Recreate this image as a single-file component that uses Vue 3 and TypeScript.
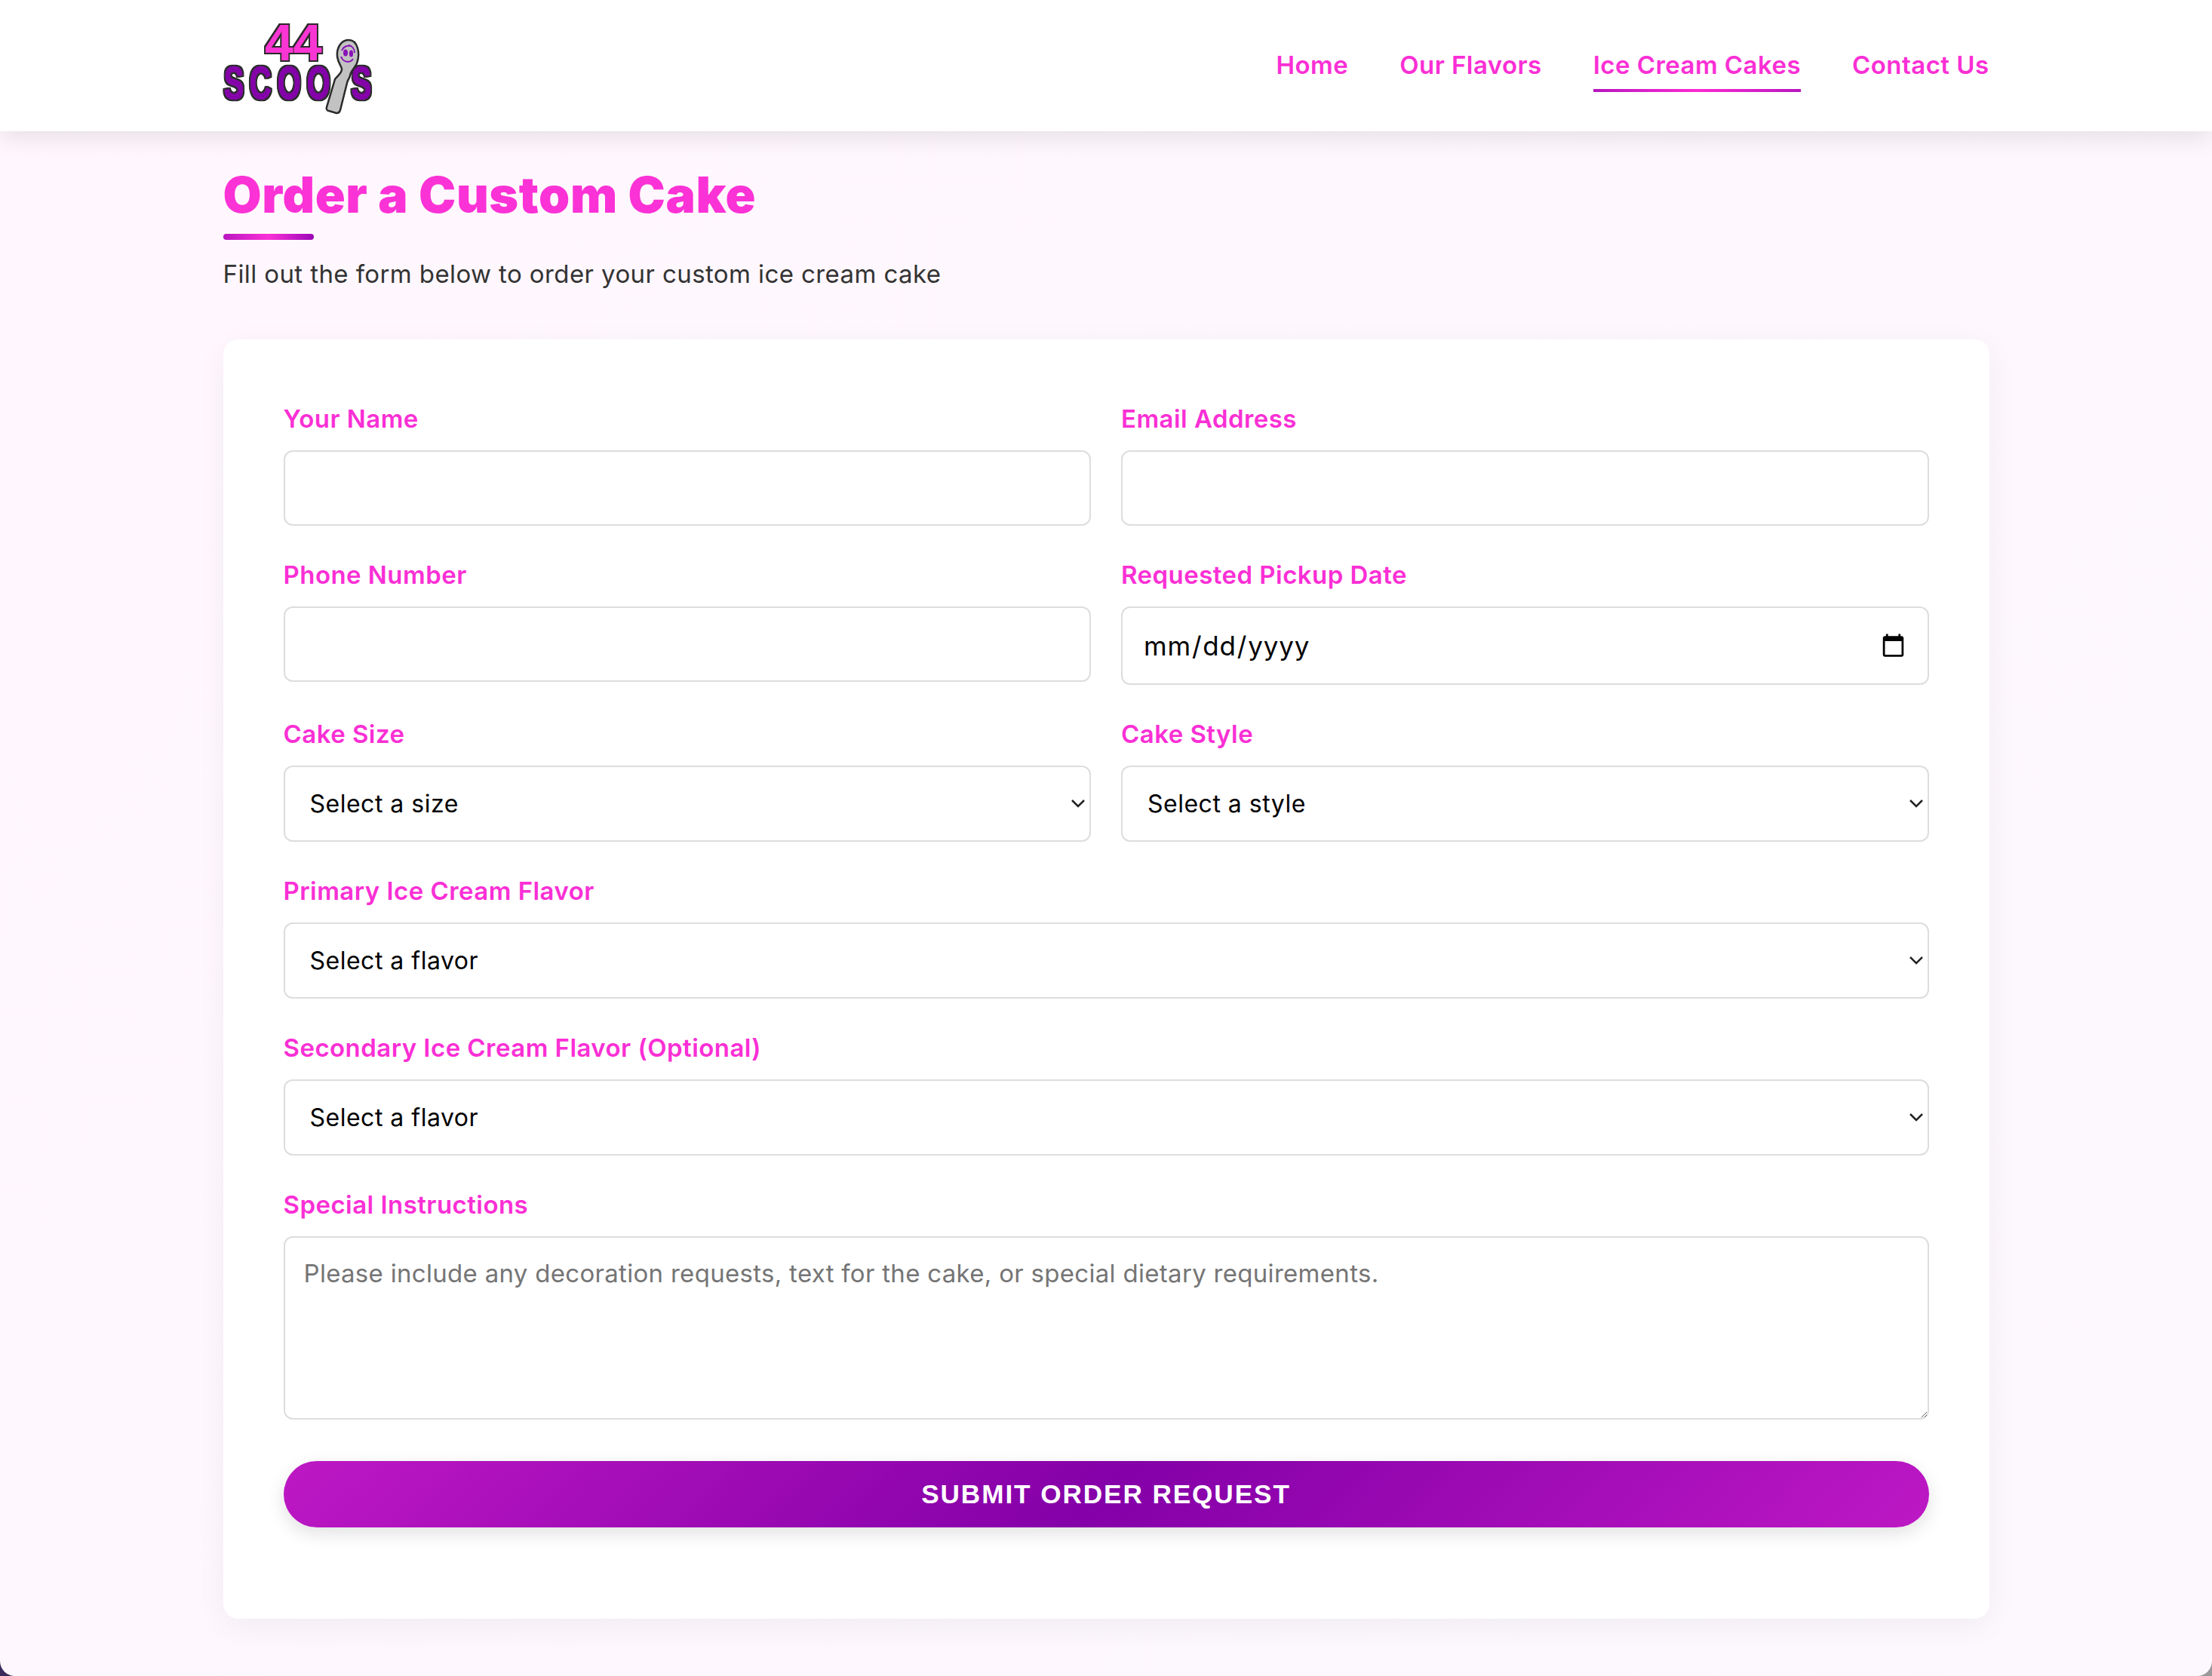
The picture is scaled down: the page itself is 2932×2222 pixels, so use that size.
<script setup lang="ts">
const navLinks = [
  { label: 'Home', active: false },
  { label: 'Our Flavors', active: false },
  { label: 'Ice Cream Cakes', active: true },
  { label: 'Contact Us', active: false },
]
</script>

<template>
  <div class="page">
    <header class="site-header">
      <div class="container header-row">
        <svg class="logo" width="210" height="142" viewBox="0 -4 210 142">
          <defs>
            <filter id="outline" x="-5%" y="-5%" width="110%" height="110%">
              <feMorphology in="SourceAlpha" operator="dilate" radius="1.5" result="fat" />
              <feFlood flood-color="#2b2b2b" />
              <feComposite in2="fat" operator="in" />
              <feMerge>
                <feMergeNode />
                <feMergeNode in="SourceGraphic" />
              </feMerge>
            </filter>
          </defs>
          <g filter="url(#outline)">
            <text class="logo-44" x="60" y="60">44</text>
            <g transform="scale(.64 1)">
              <text class="logo-word" x="9 62 120 181 273" y="111">SCOOS</text>
            </g>
          </g>
          <path class="spoon" d="M171 33C160 33 155 45 156 55C157 63 161 67 162 71C163 76 157 80 153 85L142 122C141 125 143 127 145 127L155 130C158 130 159 129 160 126L169 90C170 85 172 85 173 80C174 74 178 72 182 64C187 50 183 33 171 33Z" />
          <ellipse class="face" cx="167" cy="50" rx="3" ry="4.5" />
          <ellipse class="face" cx="174.5" cy="51" rx="2.6" ry="4.5" />
          <path class="smile" d="M161 55C164 63 173 64 177 58M162 47C164 42 169 40 173 41M171 40C176 41 179 45 179 50" />
        </svg>
        <nav class="nav">
          <a v-for="link in navLinks" :key="link.label" class="nav-link" :class="{ active: link.active }">{{ link.label }}</a>
        </nav>
      </div>
    </header>

    <main class="container main">
      <h1 class="title">Order a Custom Cake</h1>
      <div class="title-bar"></div>
      <p class="intro">Fill out the form below to order your custom ice cream cake</p>

      <form class="card" @submit.prevent>
        <div class="row">
          <div class="field">
            <label>Your Name</label>
            <input type="text" />
          </div>
          <div class="field">
            <label>Email Address</label>
            <input type="email" />
          </div>
        </div>
        <div class="row">
          <div class="field">
            <label>Phone Number</label>
            <input type="tel" />
          </div>
          <div class="field">
            <label>Requested Pickup Date</label>
            <input class="date" type="date" />
          </div>
        </div>
        <div class="row">
          <div class="field">
            <label>Cake Size</label>
            <div class="select-wrap">
              <select><option>Select a size</option></select>
              <svg class="chevron" width="18" height="12" viewBox="0 0 18 12"><path d="M1 2l8 8 8-8" /></svg>
            </div>
          </div>
          <div class="field">
            <label>Cake Style</label>
            <div class="select-wrap">
              <select><option>Select a style</option></select>
              <svg class="chevron" width="18" height="12" viewBox="0 0 18 12"><path d="M1 2l8 8 8-8" /></svg>
            </div>
          </div>
        </div>
        <div class="field">
          <label>Primary Ice Cream Flavor</label>
          <div class="select-wrap">
            <select><option>Select a flavor</option></select>
            <svg class="chevron" width="18" height="12" viewBox="0 0 18 12"><path d="M1 2l8 8 8-8" /></svg>
          </div>
        </div>
        <div class="field">
          <label>Secondary Ice Cream Flavor (Optional)</label>
          <div class="select-wrap">
            <select><option>Select a flavor</option></select>
            <svg class="chevron" width="18" height="12" viewBox="0 0 18 12"><path d="M1 2l8 8 8-8" /></svg>
          </div>
        </div>
        <div class="field">
          <label>Special Instructions</label>
          <textarea placeholder="Please include any decoration requests, text for the cake, or special dietary requirements."></textarea>
        </div>
        <button type="submit" class="submit">SUBMIT ORDER REQUEST</button>
      </form>
    </main>
  </div>
</template>

<style>
body { margin: 0; background: linear-gradient(90deg, #3a2a5c 0 50%, #9a9a9a 50%); }
</style>

<style scoped>
.page {
  height: 2222px;
  overflow: hidden;
  box-sizing: border-box;
  border-radius: 0 0 20px 20px;
  background: linear-gradient(135deg, #fff7fd, #fcf8fe);
  font-family: Inter, "Open Sans", sans-serif;
  color: #333;
}
.container { width: 2341px; margin: 0 auto; }
.site-header { height: 174px; background: #fff; box-shadow: 0 8px 30px rgba(0, 0, 0, .1); position: relative; }
.header-row { height: 174px; display: flex; align-items: center; justify-content: space-between; }
.logo { margin-left: -5px; display: block; }
.logo-44 { font: 700 68px "Liberation Sans", sans-serif; fill: #f935d3; }
.logo-word { font: 700 62px "Liberation Sans", sans-serif; fill: #8400a8; stroke: #8400a8; stroke-width: 1.5px; }
.spoon { fill: #c2c2c2; stroke: #2b2b2b; stroke-width: 2.5; }
.face { fill: #8a12b8; }
.smile { fill: none; stroke: #8a12b8; stroke-width: 2; }
.nav { display: flex; gap: 68px; margin-top: -3px; }
.nav-link {
  position: relative;
  font-size: 33px;
  font-weight: 600;
  letter-spacing: .45px;
  color: #fa2fd5;
  padding: 12px 0;
}
.nav-link.active::after {
  content: "";
  position: absolute;
  left: 0;
  right: 0;
  bottom: -4px;
  height: 4px;
  background: linear-gradient(90deg, #b716c0, #fb2ad3, #b716c0);
}
.main { padding-top: 44px; }
.title { margin: 0; font-size: 66px; line-height: 80px; font-weight: 900; color: #fb32d6; letter-spacing: .6px; }
.title-bar { width: 120px; height: 8px; margin-top: 12px; border-radius: 4px; background: linear-gradient(90deg, #b716c0, #fb32d6, #9a08b8); }
.intro { margin: 20px 0 0; font-size: 33px; line-height: 50px; letter-spacing: .4px; color: #333; }
.card {
  margin-top: 62px;
  padding: 80px;
  height: 1696px;
  box-sizing: border-box;
  background: #fff;
  border-radius: 20px;
  box-shadow: 0 10px 40px rgba(0, 0, 0, .05);
}
.row { display: grid; grid-template-columns: 1fr 1fr; gap: 40px; }
.field { margin-bottom: 40px; }
label { display: block; font-size: 33px; line-height: 50px; font-weight: 600; letter-spacing: .45px; color: #fa2fd5; margin-bottom: 17px; }
input, select, textarea {
  display: block;
  width: 100%;
  box-sizing: border-box;
  height: 100px;
  border: 2px solid #ddd;
  border-radius: 12px;
  background: #fff;
  font-family: Inter, sans-serif;
  font-size: 32px;
  padding: 0 27px;
  color: #000;
}
.date { height: 104px; font-size: 35px; letter-spacing: .8px; padding-right: 26px; }
select { appearance: none; padding-left: 33px; height: 101px; letter-spacing: .5px; }
.select-wrap { position: relative; }
.chevron { position: absolute; right: 8px; top: 44px; }
.chevron path { fill: none; stroke: #222; stroke-width: 2.5; }
textarea { height: 243px; padding: 27px 25px; resize: vertical; font-size: 33px; letter-spacing: .3px; }
textarea::placeholder { color: #757575; }
.submit {
  display: block;
  width: 100%;
  height: 88px;
  margin-top: 55px;
  border: 0;
  border-radius: 44px;
  background: linear-gradient(135deg, #bd18c4, #8400a8 50%, #bd18c4);
  box-shadow: 0 8px 24px rgba(0, 0, 0, .12);
  color: #fff;
  font: 700 35.2px "Liberation Sans", sans-serif;
  letter-spacing: 1.9px;
}
</style>
